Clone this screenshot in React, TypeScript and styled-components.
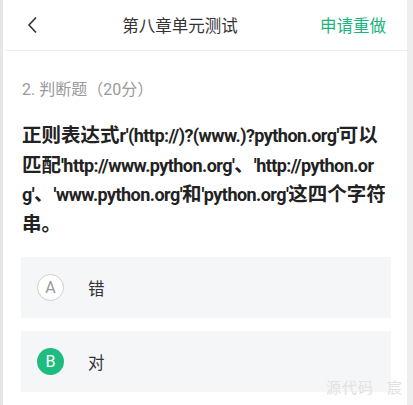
import React from "react";
import styled, { createGlobalStyle } from "styled-components";

const Global = createGlobalStyle`
  html, body { margin: 0; padding: 0; background: #ffffff; }
  body { font-family: Roboto, "Noto Sans CJK SC", sans-serif; }
`;

const Page = styled.div`
  position: relative;
  width: 413px;
  height: 405px;
  box-sizing: border-box;
  border-left: 3px solid #e6e6e6;
  border-right: 6px solid #eeeeee;
  background: #ffffff;
  overflow: hidden;
`;

const Header = styled.div`
  height: 50px;
  margin-left: 2px;
  display: flex;
  align-items: center;
  border-bottom: 1px solid #efefef;
`;

const Back = styled.div`
  width: 35px;
  box-sizing: border-box;
  padding-left: 21px;
  display: flex;
  align-items: center;
`;

const Title = styled.div`
  flex: 1;
  text-align: center;
  font-size: 16.5px;
  color: #333333;
  font-family: "Noto Sans CJK SC", sans-serif;
`;

const Redo = styled.div`
  padding-right: 21px;
  font-size: 16.5px;
  color: #1bb57c;
  font-family: "Noto Sans CJK SC", sans-serif;
  white-space: nowrap;
`;

const Body = styled.div`
  padding: 0 16px 0 18px;
`;

const Kind = styled.div`
  margin-top: 26px;
  padding-left: 1px;
  font-size: 16px;
  line-height: 26px;
  color: #9a9a9a;
  font-family: Roboto, "Noto Sans CJK SC", sans-serif;
`;

const Question = styled.div`
  margin-top: 16px;
  padding-left: 1px;
  font-size: 19.5px;
  line-height: 29.5px;
  font-weight: 700;
  color: #222222;
  word-break: break-all;
  font-family: "Noto Sans CJK SC", sans-serif;
`;

const Latin = styled.span`
  font-family: Roboto, sans-serif;
  font-size: 18px;
  line-height: 18px;
  letter-spacing: -0.55px;
`;

const Options = styled.div`
  margin-top: 20px;
  display: flex;
  flex-direction: column;
  gap: 13px;
`;

const Option = styled.div`
  height: 61px;
  background: #f5f6f8;
  display: flex;
  align-items: center;
  padding-left: 16px;
`;

const Badge = styled.div<{ $active?: boolean }>`
  width: 27px;
  height: 27px;
  box-sizing: border-box;
  border-radius: 50%;
  display: flex;
  align-items: center;
  justify-content: center;
  font-size: 16px;
  font-family: Roboto, sans-serif;
  background: ${(p) => (p.$active ? "#1ebd7f" : "#ffffff")};
  color: ${(p) => (p.$active ? "#ffffff" : "#999999")};
  border: ${(p) => (p.$active ? "none" : "1px solid #cfcfcf")};
`;

const OptText = styled.div`
  margin-left: 24px;
  font-size: 16.5px;
  color: #333333;
  font-family: "Noto Sans CJK SC", sans-serif;
`;

const Watermark = styled.div`
  position: absolute;
  right: 4px;
  bottom: 8px;
  font-size: 15px;
  color: #e2e2e2;
  font-family: "Noto Sans CJK SC", sans-serif;
  letter-spacing: 1px;
  white-space: pre;
`;

export default function App() {
  return (
    <>
      <Global />
      <Page>
        <Header>
          <Back>
            <svg width="12" height="18" viewBox="0 0 12 18">
              <path d="M10 1.5 L3 9 L10 16.5" fill="none" stroke="#333" strokeWidth="1.6" />
            </svg>
          </Back>
          <Title>第八章单元测试</Title>
          <Redo>申请重做</Redo>
        </Header>
        <Body>
          <Kind>2. 判断题（20分）</Kind>
          <Question>
            正则表达式<Latin>r'(http://)?(www.)?python.org'</Latin>可以匹配
            <Latin>'http://www.python.org'</Latin>、<Latin>'http://python.org'</Latin>、
            <Latin>'www.python.org'</Latin>和<Latin>'python.org'</Latin>这四个字符串。
          </Question>
          <Options>
            <Option>
              <Badge>A</Badge>
              <OptText>错</OptText>
            </Option>
            <Option>
              <Badge $active>B</Badge>
              <OptText>对</OptText>
            </Option>
          </Options>
        </Body>
        <Watermark>源代码   宸</Watermark>
      </Page>
    </>
  );
}
